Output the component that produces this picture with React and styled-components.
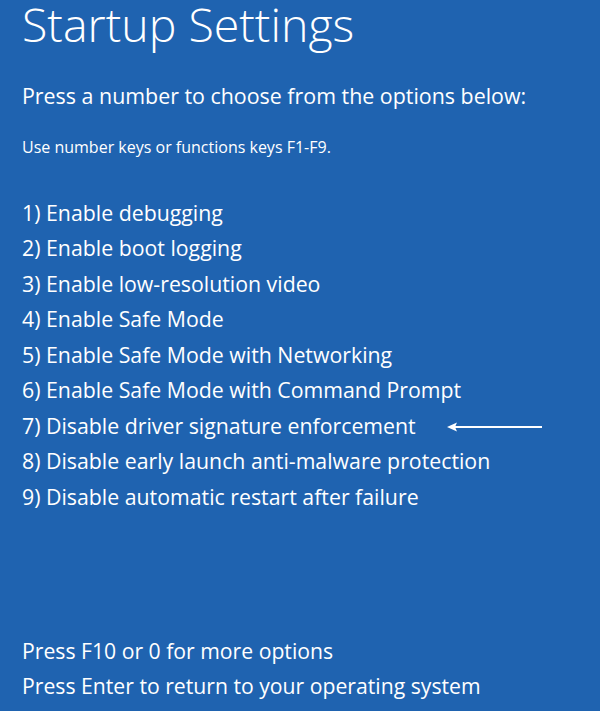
import styled, { createGlobalStyle } from "styled-components";

const GlobalStyle = createGlobalStyle`
  html, body {
    margin: 0;
    padding: 0;
    background-color: #1f63b0;
  }
  body {
    font-family: "Open Sans", "Noto Sans", sans-serif;
    color: #ffffff;
  }
`;

const Screen = styled.div`
  display: flex;
  flex-direction: column;
  min-height: 711px;
  box-sizing: border-box;
  padding: 0 0 8px 22px;
  background-color: #1f63b0;
`;

const Title = styled.h1`
  margin: 0;
  font-size: 46.5px;
  font-weight: 300;
  line-height: 48px;
`;

const Prompt = styled.p`
  margin: 34px 0 0;
  font-size: 21.4px;
  font-weight: 400;
  line-height: 28px;
`;

const Hint = styled.p`
  margin: 27px 0 0;
  font-size: 16px;
  line-height: 20px;
`;

const Options = styled.ol`
  list-style: none;
  margin: 37.5px 0 0;
  padding: 0;
`;

const Option = styled.li`
  display: flex;
  align-items: center;
  font-size: 21.3px;
  line-height: 35.5px;
`;

const Arrow = styled.svg`
  margin: 4px 0 0 31px;
  width: 96px;
  height: 12px;
`;

const Footer = styled.div`
  margin-top: auto;
  font-size: 21.2px;
  line-height: 35px;
`;

const options = [
  "Enable debugging",
  "Enable boot logging",
  "Enable low-resolution video",
  "Enable Safe Mode",
  "Enable Safe Mode with Networking",
  "Enable Safe Mode with Command Prompt",
  "Disable driver signature enforcement",
  "Disable early launch anti-malware protection",
  "Disable automatic restart after failure",
];

export default function App() {
  return (
    <>
      <GlobalStyle />
      <Screen>
        <Title>Startup Settings</Title>
        <Prompt>Press a number to choose from the options below:</Prompt>
        <Hint>Use number keys or functions keys F1-F9.</Hint>
        <Options>
          {options.map((text, i) => (
            <Option key={text}>
              {i + 1}) {text}
              {i === 6 && (
                <Arrow viewBox="0 0 96 12">
                  <path d="M6 6 H95" stroke="#fff" strokeWidth="2.2" />
                  <path d="M0 6 L10 1.5 L8 6 L10 10.5 Z" fill="#fff" />
                </Arrow>
              )}
            </Option>
          ))}
        </Options>
        <Footer>
          <div>Press F10 or 0 for more options</div>
          <div>Press Enter to return to your operating system</div>
        </Footer>
      </Screen>
    </>
  );
}
